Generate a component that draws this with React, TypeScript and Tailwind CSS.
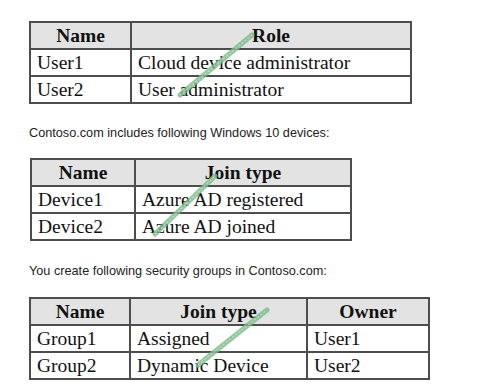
const serif = "font-['Liberation_Serif','Times_New_Roman',serif]"

type Row = string[]

function Watermark({ x1, y1, x2, y2 }: { x1: number; y1: number; x2: number; y2: number }) {
  return (
    <svg className="pointer-events-none absolute inset-0 h-full w-full overflow-visible">
      <line x1={x1} y1={y1} x2={x2} y2={y2} stroke="#7db98a" strokeOpacity="0.8" strokeWidth="5" strokeLinecap="round" />
      <line x1={x1} y1={y1} x2={x2} y2={y2} stroke="#cfe8d4" strokeOpacity="0.7" strokeWidth="1.2" strokeDasharray="2 2" />
    </svg>
  )
}

function DataTable({
  widths,
  head,
  rows,
  mark,
}: {
  widths: number[]
  head: string[]
  rows: Row[]
  mark: { x1: number; y1: number; x2: number; y2: number }
}) {
  return (
    <div className="relative w-fit">
      <table className={`${serif} border-collapse border-2 border-[#4d4d4d] text-[19.5px] leading-none text-[#111]`}>
        <colgroup>
          {widths.map((w, i) => (
            <col key={i} style={{ width: w }} />
          ))}
        </colgroup>
        <thead>
          <tr className="h-[27px] bg-[#e3e3e3]">
            {head.map((h) => (
              <th key={h} className="border-2 border-[#4d4d4d] px-1.5 text-center font-bold">
                {h}
              </th>
            ))}
          </tr>
        </thead>
        <tbody>
          {rows.map((r) => (
            <tr key={r[0]} className="h-[27px]">
              {r.map((c, i) => (
                <td key={i} className="border-2 border-[#4d4d4d] px-1.5 text-left">
                  {c}
                </td>
              ))}
            </tr>
          ))}
        </tbody>
      </table>
      <Watermark {...mark} />
    </div>
  )
}

export default function App() {
  return (
    <div className="min-h-[390px] w-[497px] bg-white pl-[29px] pt-[21px]">
      <DataTable
        widths={[101, 280]}
        head={['Name', 'Role']}
        rows={[
          ['User1', 'Cloud device administrator'],
          ['User2', 'User administrator'],
        ]}
        mark={{ x1: 151, y1: 74, x2: 223, y2: 14 }}
      />

      <p className="mt-[22px] font-['Liberation_Sans',Arial,sans-serif] text-[12.7px] leading-[15px] text-[#222]">
        Contoso.com includes following Windows 10 devices:
      </p>

      <div className="mt-[17px] pl-px">
        <DataTable
          widths={[104, 216]}
          head={['Name', 'Join type']}
          rows={[
            ['Device1', 'Azure AD registered'],
            ['Device2', 'Azure AD joined'],
          ]}
          mark={{ x1: 125, y1: 76, x2: 185, y2: 18 }}
        />
      </div>

      <p className="mt-[23px] font-['Liberation_Sans',Arial,sans-serif] text-[12.7px] leading-[15px] text-[#222]">
        You create following security groups in Contoso.com:
      </p>

      <div className="mt-[18px]">
        <DataTable
          widths={[100, 177, 122]}
          head={['Name', 'Join type', 'Owner']}
          rows={[
            ['Group1', 'Assigned', 'User1'],
            ['Group2', 'Dynamic Device', 'User2'],
          ]}
          mark={{ x1: 169, y1: 68, x2: 238, y2: 13 }}
        />
      </div>
    </div>
  )
}
